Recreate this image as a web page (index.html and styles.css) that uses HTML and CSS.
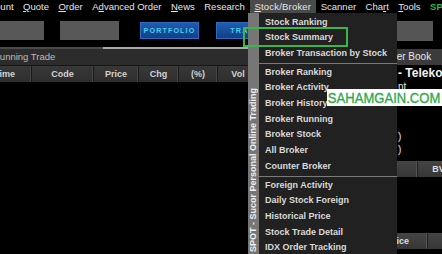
FILE: index.html
```html
<!DOCTYPE html>
<html>
<head>
<meta charset="utf-8">
<title>SPOT - Stock/Broker menu</title>
<link rel="stylesheet" href="styles.css">
</head>
<body>
<div class="app">
  <nav class="menubar">
    <span class="mi">Account</span>
    <span class="mi"><u>Q</u>uote</span>
    <span class="mi"><u>O</u>rder</span>
    <span class="mi">A<u>d</u>vanced Order</span>
    <span class="mi"><u>N</u>ews</span>
    <span class="mi">Research</span>
    <span class="mi active"><u>S</u>tock/Broker</span>
    <span class="mi">Scanner</span>
    <span class="mi">Cha<u>r</u>t</span>
    <span class="mi"><u>T</u>ools</span>
    <span class="mi brand">SPOT</span>
  </nav>

  <div class="toolbar">
    <div class="tb-grey tb-a"></div>
    <div class="tb-grey tb-b"></div>
    <div class="tb-blue tb-c">PORTFOLIO</div>
    <div class="tb-blue tb-d">TRADE</div>
    <div class="tb-grey tb-e"></div>
  </div>

  <div class="splitter"></div>

  <div class="panels">
    <section class="pane-left">
      <div class="pane-title">Running Trade</div>
      <div class="thead">
        <div class="th">Time</div>
        <div class="th">Code</div>
        <div class="th">Price</div>
        <div class="th">Chg</div>
        <div class="th">(%)</div>
        <div class="th">Vol</div>
      </div>
    </section>

    <section class="pane-right">
      <div class="rp-title">Order Book</div>
      <div class="rp-company">- Telekomunikasi Indonesia</div>
      <div class="rp-sub">nt</div>
      <div class="rp-values">
        <div class="rp-line">)</div>
        <div class="rp-line">)</div>
      </div>
      <div class="rp-bar bar-bv">
        <div class="bc bc-1"></div>
        <div class="bc bc-2">BV</div>
        <div class="bc bc-3"></div>
      </div>
      <div class="rp-bar bar-price">
        <div class="bc bc-p1"></div>
        <div class="bc bc-p2">Price</div>
        <div class="bc bc-p3">Lot</div>
      </div>
    </section>
  </div>

  <div class="dropdown">
    <div class="side-band"><span class="side-text">SPOT - Sucor Personal Online Trading</span></div>
    <ul class="menu">
      <li class="item">Stock Ranking</li>
      <li class="item">Stock Summary</li>
      <li class="item">Broker Transaction by Stock</li>
      <li class="sep"></li>
      <li class="item">Broker Ranking</li>
      <li class="item">Broker Activity</li>
      <li class="item">Broker History</li>
      <li class="item">Broker Running</li>
      <li class="item">Broker Stock</li>
      <li class="item">All Broker</li>
      <li class="item">Counter Broker</li>
      <li class="sep"></li>
      <li class="item">Foreign Activity</li>
      <li class="item">Daily Stock Foreign</li>
      <li class="item">Historical Price</li>
      <li class="item">Stock Trade Detail</li>
      <li class="item">IDX Order Tracking</li>
    </ul>
  </div>

  <div class="highlight"></div>
  <div class="watermark"><span class="wm-text">SAHAMGAIN.COM</span></div>
</div>
</body>
</html>
```

FILE: styles.css
```css
html, body {
  margin: 0;
  padding: 0;
  background: #000;
}

body {
  width: 442px;
  height: 254px;
  overflow: hidden;
  font-family: "Liberation Sans", Arial, sans-serif;
}

.app {
  position: relative;
  width: 442px;
  height: 254px;
  overflow: hidden;
  background: #000;
}

/* ---------- top menu bar ---------- */
.menubar {
  display: flex;
  height: 14px;
  margin-left: -25.5px;
  white-space: nowrap;
  font-size: 9.5px;
  line-height: 14px;
  color: #e6e6e6;
}

.mi {
  flex: none;
  padding: 0 4.75px;
}

.mi u {
  text-decoration-thickness: 1px;
  text-underline-offset: 1px;
}

.mi.active {
  background: #4a4a4a;
  letter-spacing: 0.2px;
}

.mi.brand {
  color: #2fb84c;
  font-weight: bold;
}

/* ---------- toolbar ---------- */
.toolbar {
  display: flex;
  align-items: flex-start;
  height: 33px;
  box-sizing: border-box;
  padding-top: 6.5px;
}

.tb-grey {
  flex: none;
  height: 19px;
  background: #585858;
}

.tb-a { width: 44px; }
.tb-b { width: 59px; margin-left: 16px; }
.tb-e { width: 53px; margin-left: auto; margin-right: 9px; height: 20px; background: #555; }

.tb-blue {
  flex: none;
  width: 59px;
  height: 17px;
  margin-top: 1px;
  box-sizing: border-box;
  border: 1px solid #2e6cc2;
  background: linear-gradient(#1f5cb0, #133f86);
  color: #48cdea;
  font-size: 7.2px;
  font-weight: bold;
  letter-spacing: 1.1px;
  line-height: 15px;
  text-align: center;
  overflow: hidden;
  white-space: nowrap;
}

.tb-c { margin-left: 21px; }
.tb-d { margin-left: 17px; }

/* ---------- splitter ---------- */
.splitter {
  height: 2px;
  background: linear-gradient(to right, #4a4a4a 0, #4a4a4a 103px, #a9a9a9 103px, #a9a9a9 259px, transparent 259px);
}

/* ---------- panels ---------- */
.panels {
  display: flex;
  height: 205px;
}

.pane-left {
  flex: none;
  width: 281px;
  margin-left: -22px;
}

.pane-title {
  height: 16px;
  line-height: 16px;
  padding-left: 15px;
  background: #2c2c2c;
  border-bottom: 1px solid #171717;
  color: #bdbdbd;
  font-size: 9.5px;
  white-space: nowrap;
}

.thead {
  display: grid;
  grid-template-columns: 54px 62px 45px 40px 39px 41px;
  height: 16px;
  background: linear-gradient(#383838, #2e2e2e);
}

.th {
  box-sizing: border-box;
  border-right: 1px solid #1b1b1b;
  box-shadow: inset -2px 0 0 -1px #454545;
  color: #d2d2d2;
  font-size: 9px;
  font-weight: bold;
  line-height: 16px;
  text-align: center;
  white-space: nowrap;
}

.pane-right {
  flex: none;
  width: 183px;
  overflow: hidden;
  color: #e6e6e6;
  display: flex;
  flex-direction: column;
}

.rp-title {
  height: 16px;
  line-height: 16px;
  padding-left: 121px;
  background: #3b3b3b;
  font-size: 10px;
  white-space: nowrap;
}

.rp-company {
  height: 16px;
  line-height: 16px;
  padding-left: 139px;
  color: #f4f4f4;
  font-size: 12px;
  font-weight: bold;
  white-space: nowrap;
}

.rp-sub {
  height: 12px;
  line-height: 12px;
  padding-left: 139px;
  font-size: 10px;
}

.rp-values {
  margin-top: 37px;
}

.rp-line {
  height: 13px;
  line-height: 13px;
  padding-left: 139px;
  font-size: 10px;
}

.rp-bar {
  flex: none;
  display: flex;
  height: 16px;
  background: linear-gradient(#454545, #363636);
  color: #dcdcdc;
  font-size: 9px;
  font-weight: bold;
  line-height: 16px;
  white-space: nowrap;
}

.bar-bv { margin-top: 5px; }
.bar-price { margin-top: 56px; }

.bc {
  flex: none;
  box-sizing: border-box;
  border-right: 1px solid #1e1e1e;
  box-shadow: inset -2px 0 0 -1px #555;
  text-align: center;
}

.bc-1 { width: 159px; }
.bc-2 { width: 42px; }
.bc-3 { width: 60px; }
.bc-p1 { width: 110px; }
.bc-p2 { width: 59px; }
.bc-p3 { width: 60px; }

/* ---------- dropdown overlay ---------- */
.dropdown {
  position: absolute;
  left: 248px;
  top: 13px;
  bottom: 0;
  display: flex;
  width: 149px;
}

.side-band {
  flex: none;
  width: 11px;
  background: #767676;
  display: flex;
  justify-content: center;
}

.side-text {
  writing-mode: vertical-rl;
  transform: rotate(180deg);
  align-self: flex-end;
  padding-inline-start: 2px;
  color: #f0f0f0;
  font-size: 9px;
  font-weight: bold;
  line-height: 11px;
  white-space: nowrap;
}

.menu {
  flex: none;
  width: 138px;
  margin: 0;
  padding: 1.65px 0 0;
  list-style: none;
  background: #212121;
  overflow: hidden;
}

.item {
  height: 15.7px;
  line-height: 15.7px;
  padding-left: 6px;
  color: #dadada;
  font-size: 9px;
  font-weight: bold;
  white-space: nowrap;
}

.sep {
  height: 1px;
  margin: 1px 0;
  background: #7a7a7a;
}

/* ---------- annotation overlays ---------- */
.highlight {
  position: absolute;
  left: 243px;
  top: 27px;
  width: 105px;
  height: 20px;
  box-sizing: border-box;
  border: 2px solid #3bb54a;
}

.watermark {
  position: absolute;
  left: 327px;
  top: 89px;
  width: 115px;
  height: 17px;
  background: #fff;
  overflow: hidden;
}

.wm-text {
  display: inline-block;
  padding-left: 1px;
  color: #2ea84e;
  -webkit-text-stroke: 0.35px #2ea84e;
  font-size: 15px;
  line-height: 17px;
  white-space: nowrap;
  transform: scaleX(0.87);
  transform-origin: left center;
}
```
